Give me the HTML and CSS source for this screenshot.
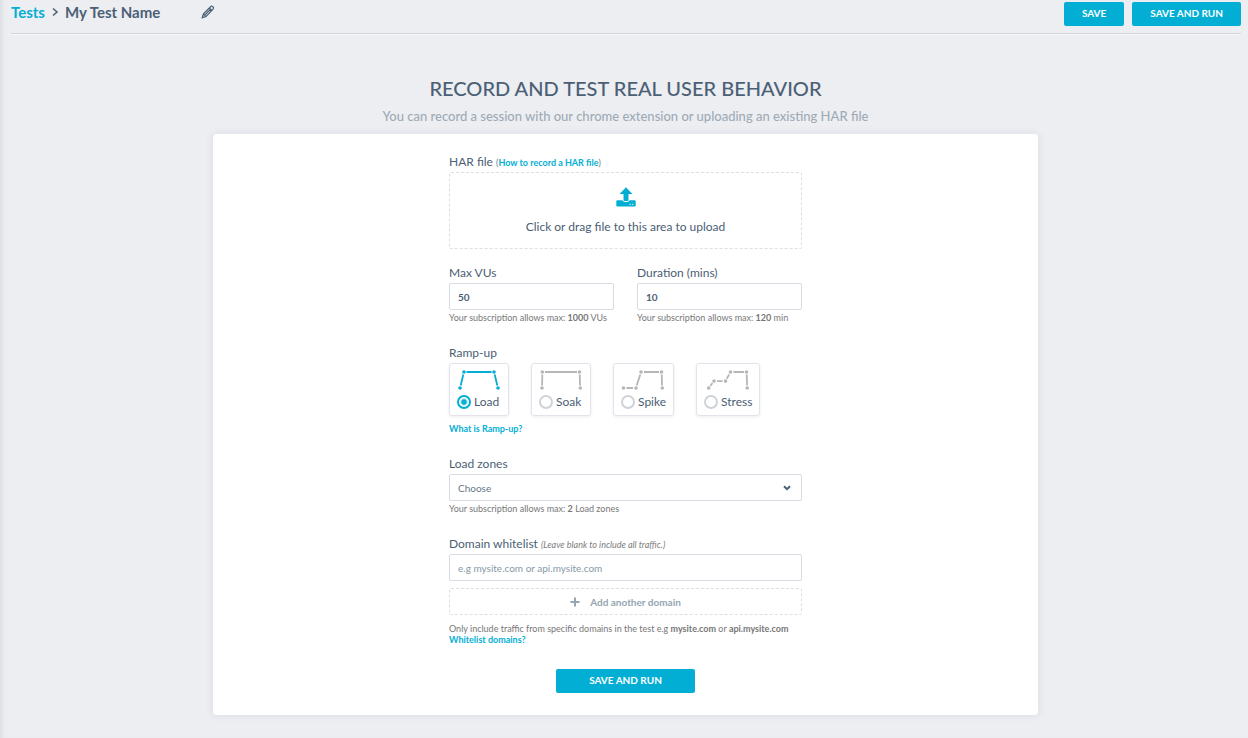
FILE: index.html
```html
<!DOCTYPE html>
<html lang="en">
<head>
<meta charset="utf-8">
<meta name="viewport" content="width=device-width, initial-scale=1">
<title>My Test Name</title>
<link rel="stylesheet" href="styles.css">
</head>
<body>
<header class="topbar">
  <nav class="crumbs" aria-label="Breadcrumb">
    <a class="crumb-link" href="#">Tests</a>
    <svg class="crumb-sep" width="7" height="10" viewBox="0 0 7 10" aria-hidden="true"><path d="M1 1.500 5 5 1 8.500"/></svg>
    <span class="crumb-name">My Test Name</span>
    <button class="icon-btn" type="button" aria-label="Edit name">
      <svg width="14" height="14" viewBox="0 0 14 14" aria-hidden="true"><path d="M1.2 12.8 2.3 9 9.3 2c.8-.9 1.7-1 2.5-.3.9.8.9 1.7.1 2.6L5 11.4zM2.3 9 5 11.4M8.3 3l2.6 2.5M3.7 10.1 9.8 4"/></svg>
    </button>
  </nav>
  <div class="actions">
    <button class="btn" type="button">SAVE</button>
    <button class="btn" type="button">SAVE AND RUN</button>
  </div>
</header>
<main class="page">
  <h1 class="title">RECORD AND TEST REAL USER BEHAVIOR</h1>
  <p class="subtitle">You can record a session with our chrome extension or uploading an existing HAR file</p>
  <section class="card">
    <form class="form">
      <div class="field field-upload">
        <div class="label">HAR file <span class="note">(<a class="link" href="#">How to record a HAR file</a>)</span></div>
        <button class="dropzone" type="button">
          <svg width="20" height="20" viewBox="0 0 20 20" aria-hidden="true"><path class="fill" d="M10 .3 16.4 7H12.500v6.200c0 1.200-5 1.200-5 0V7H3.600z"/><path class="fill" d="M1.200 13.300H6.400c.4 2.400 6.800 2.400 7.200 0h5.200q.9 0 .9.900v4.400q0 .9-.9.900H1.200q-.9 0-.9-.9v-4.400q0-.9.9-.9z"/><path class="dots" d="M13.500 17.300h1.200M16.200 17.300h1.200"/></svg>
          <span>Click or drag file to this area to upload</span>
        </button>
      </div>
      <div class="pair">
        <div class="field">
          <label class="label" for="vus">Max VUs</label>
          <input class="input number" id="vus" type="text" value="50">
          <p class="help">Your subscription allows max: <b>1000</b> VUs</p>
        </div>
        <div class="field">
          <label class="label" for="duration">Duration (mins)</label>
          <input class="input number" id="duration" type="text" value="10">
          <p class="help">Your subscription allows max: <b>120</b> min</p>
        </div>
      </div>
      <fieldset class="field ramp">
        <legend class="label">Ramp-up</legend>
        <div class="options">
          <label class="option">
            <svg class="shape" width="44" height="24" viewBox="0 0 44 24" aria-hidden="true"><path d="M3.700 17.500 6.300 6.500M9.500 4h25M37.700 6.500l2.600 11"/><g><circle cx="7" cy="4" r="1.800"/><circle cx="37" cy="4" r="1.800"/><circle cx="3" cy="20" r="1.800"/><circle cx="41" cy="20" r="1.800"/></g></svg>
            <span class="choice"><input class="radio" type="radio" name="ramp" checked>Load</span>
          </label>
          <label class="option">
            <svg class="shape" width="44" height="24" viewBox="0 0 44 24" aria-hidden="true"><path d="M3.100 17.500 3.300 6.500M6 4h32M40.700 6.500l.4 11"/><g><circle cx="3.300" cy="4" r="1.800"/><circle cx="40.500" cy="4" r="1.800"/><circle cx="3" cy="20" r="1.800"/><circle cx="41.300" cy="20" r="1.800"/></g></svg>
            <span class="choice"><input class="radio" type="radio" name="ramp">Soak</span>
          </label>
          <label class="option">
            <svg class="shape" width="44" height="24" viewBox="0 0 44 24" aria-hidden="true"><path d="M5.500 20H12M15.700 17.500 19.300 6.500M23 4h15M40.700 6.500l.4 11"/><g><circle cx="2.500" cy="20" r="1.800"/><circle cx="15" cy="20" r="1.800"/><circle cx="20" cy="4" r="1.800"/><circle cx="40.500" cy="4" r="1.800"/><circle cx="41.300" cy="20" r="1.800"/></g></svg>
            <span class="choice"><input class="radio" type="radio" name="ramp">Spike</span>
          </label>
          <label class="option">
            <svg class="shape" width="46" height="24" viewBox="0 0 46 24" aria-hidden="true"><path d="M6.200 18 8.500 15M13 13.100h5.500M22.800 10.700 25.200 6.400M29.500 4H40M42.700 6.500l.4 11"/><g><circle cx="4.700" cy="20" r="1.800"/><circle cx="10" cy="13.100" r="1.800"/><circle cx="21.500" cy="13.100" r="1.800"/><circle cx="26.500" cy="4" r="1.800"/><circle cx="42.500" cy="4" r="1.800"/><circle cx="43.200" cy="20" r="1.800"/></g></svg>
            <span class="choice"><input class="radio" type="radio" name="ramp">Stress</span>
          </label>
        </div>
        <a class="link ramp-link" href="#">What is Ramp-up?</a>
      </fieldset>
      <div class="field">
        <label class="label" for="zones">Load zones</label>
        <div class="select-wrap">
          <select class="input select" id="zones"><option>Choose</option></select>
          <svg class="chevron" width="8" height="6" viewBox="0 0 8 6" aria-hidden="true"><path d="M1 1.200 4 4.200 7 1.200"/></svg>
        </div>
        <p class="help">Your subscription allows max: <b>2</b> Load zones</p>
      </div>
      <div class="field">
        <label class="label" for="domain">Domain whitelist <em class="note">(Leave blank to include all traffic.)</em></label>
        <input class="input" id="domain" type="text" placeholder="e.g mysite.com or api.mysite.com">
        <button class="add" type="button">
          <svg width="10" height="10" viewBox="0 0 10 10" aria-hidden="true"><path d="M5 .5v9M.5 5h9"/></svg>
          <span>Add another domain</span>
        </button>
        <p class="hint">Only include traffic from specific domains in the test e.g <b>mysite.com</b> or <b>api.mysite.com</b><br><a class="link" href="#">Whitelist domains?</a></p>
      </div>
      <button class="btn submit" type="submit">SAVE AND RUN</button>
    </form>
  </section>
</main>
</body>
</html>
```
FILE: styles.css
```css
* { box-sizing: border-box; }

body {
  margin: 0;
  min-height: 100vh;
  padding: 0 7px 23px 10px;
  background: #edeef2;
  box-shadow: inset 5px 0 5px -3px #dcdde1;
  color: #4b6075;
  font-family: Lato, "Liberation Sans", sans-serif;
  font-size: 12px;
}

button, input, select { font: inherit; color: inherit; }
button { cursor: pointer; }
h1, p { margin: 0; }
svg { display: block; fill: none; stroke: currentColor; }

.topbar {
  display: flex;
  justify-content: space-between;
  align-items: flex-start;
  height: 34px;
  margin-left: 1px;
  padding-top: 2px;
  border-bottom: 1px solid #d2d3dc;
  box-shadow: 0 1px 0 #f9f9fb;
}
.crumbs {
  display: flex;
  align-items: center;
  height: 20px;
  font-size: 15px;
  font-weight: 700;
}
.crumb-link { color: #03aed4; text-decoration: none; }
.crumb-sep { margin: 0 6px 0 7px; stroke-width: 1.600; }
.icon-btn {
  margin-left: 41px;
  padding: 0;
  border: 0;
  background: none;
}
.icon-btn svg { stroke-width: 1.200; }
.actions { display: flex; gap: 8px; }

.btn {
  height: 24px;
  padding: 0 18px 2px;
  border: 0;
  border-radius: 2px;
  background: #03aed4;
  color: #fff;
  font-size: 10px;
  font-weight: 700;
}

.page { max-width: 825px; margin: 0 auto; text-align: center; }
.title {
  padding-top: 41px;
  font-size: 20px;
  line-height: 26px;
  font-weight: 500;
}
.subtitle {
  padding: 6px 0 9px;
  color: #9eabb6;
  font-size: 13px;
  font-weight: 500;
  line-height: 18px;
}
.card {
  padding: 18px 20px 22px;
  border-radius: 4px;
  background: #fff;
  box-shadow: 0 0 8px rgba(60, 70, 100, 0.1);
  text-align: left;
}
.form { max-width: 353px; margin: 0 auto; }

.field { min-width: 0; margin: 0 0 17px; padding: 0; border: 0; }
.field-upload { margin-bottom: 14px; }
.label {
  display: block;
  height: 20px;
  padding: 0;
  font-size: 12px;
  line-height: 20px;
}
.note { color: #7d7d7d; font-size: 9px; }
.link { color: #03aed4; font-size: 9px; font-weight: 700; text-decoration: none; }

.dropzone {
  display: flex;
  flex-direction: column;
  align-items: center;
  gap: 12px;
  width: 100%;
  height: 77px;
  padding: 14px 0 0;
  border: 1px dashed #dddfe2;
  border-radius: 2px;
  background: none;
}
.dropzone svg { color: #03aed4; stroke: none; }
.dropzone .fill { fill: currentColor; }
.dropzone .dots { stroke: #fff; stroke-width: 1; }

.pair { display: grid; grid-template-columns: 1fr 1fr; gap: 23px; }
.input {
  display: block;
  width: 100%;
  height: 27px;
  padding: 0 8px;
  border: 1px solid #d9dbe2;
  border-radius: 2px;
  background: #fff;
  font-size: 10px;
}
.number { font-weight: 700; }
.input::placeholder { color: #8799a6; opacity: 1; }
.help, .hint { color: #777; font-size: 9px; line-height: 16px; }
.hint { margin: 8px 0 24px; line-height: 11px; }

.options { display: flex; gap: 22px; }
.option {
  height: 53px;
  padding: 4px 7px 0;
  border: 1px solid #e3e4eb;
  border-radius: 3px;
  box-shadow: 0 1px 3px rgba(70, 80, 110, 0.1);
}
.shape { color: #b6b6b6; stroke-width: 1.800; }
.shape g { fill: currentColor; stroke: none; }
.option:has(:checked) .shape { color: #03aed4; }
.choice { display: flex; align-items: center; gap: 3px; height: 20px; line-height: 14px; }
.radio {
  flex: none;
  width: 14px;
  height: 14px;
  margin: 0;
  border: 2px solid #cfd3d9;
  border-radius: 50%;
  appearance: none;
}
.radio:checked {
  border-color: #03aed4;
  background: radial-gradient(circle, #03aed4 0 2px, #fff 4px);
}
.ramp-link { display: block; margin-top: 5px; line-height: 16px; }

.select-wrap { display: grid; align-items: center; }
.select-wrap > * { grid-area: 1 / 1; }
.select { appearance: none; color: #66788a; }
.chevron { justify-self: end; margin-right: 11px; stroke-width: 2; pointer-events: none; }

.add {
  display: flex;
  justify-content: center;
  align-items: center;
  gap: 10px;
  width: 100%;
  height: 27px;
  margin-top: 7px;
  border: 1px dashed #dddfe2;
  border-radius: 2px;
  background: none;
  color: #94a5b1;
  font-size: 10px;
  font-weight: 700;
}
.add svg { stroke-width: 2; }
.submit { display: block; width: 139px; margin: 0 auto; }
```
